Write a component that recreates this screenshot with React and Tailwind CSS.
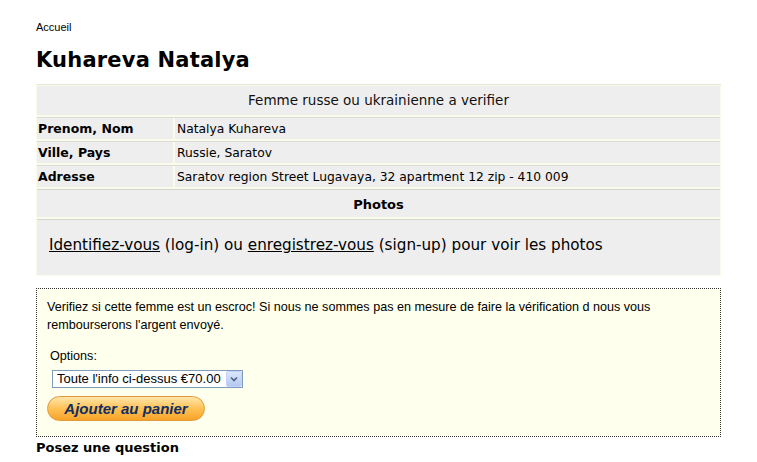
import React from 'react';

const rows = [
  { label: 'Prenom, Nom', value: 'Natalya Kuhareva' },
  { label: 'Ville, Pays', value: 'Russie, Saratov' },
  { label: 'Adresse', value: 'Saratov region Street Lugavaya, 32 apartment 12 zip - 410 009' },
];

function App() {
  return (
    <div className="min-h-[462px] bg-white px-[36px] pt-[20px] text-black font-['DejaVu_Sans',sans-serif]">
      <div className="w-[685px]">
        {/* Breadcrumb */}
        <div className="font-['Liberation_Sans',Arial,sans-serif] text-[11px] leading-[14px]">Accueil</div>

        {/* Title */}
        <h1 className="mt-[12px] text-[21px] leading-[28px] font-bold tracking-[0.2px]">Kuhareva Natalya</h1>

        {/* Info table */}
        <div className="mt-[10px] flex flex-col gap-[2px] bg-[#fbfbec] border-t border-[#e4e4d8] p-[1px]">
          <div className="h-[29px] bg-[#eeeeee] flex items-center justify-center text-[13.5px] text-[#111]">
            Femme russe ou ukrainienne a verifier
          </div>
          {rows.map((r) => (
            <div key={r.label} className="flex gap-[2px] h-[22px] border-t border-[#dcdcd2]">
              <div className="w-[136px] bg-[#eeeeee] flex items-center pl-[1px] pt-[1px] text-[12.5px] font-bold">{r.label}</div>
              <div className="flex-1 bg-[#eeeeee] flex items-center pl-[2px] pt-[1px] text-[12.3px]">
                {r.value}
              </div>
            </div>
          ))}
          <div className="h-[28px] bg-[#eeeeee] border-t border-[#d4d4d0] flex items-center justify-center pt-[3px] text-[13px] font-bold">
            Photos
          </div>
          <div className="h-[56px] bg-[#eeeeee] border-t border-[#d4d4d0] pl-[12px] pt-[14px] text-[15.2px]">
            <a href="#" className="underline">Identifiez-vous</a> (log-in) ou{' '}
            <a href="#" className="underline">enregistrez-vous</a> (sign-up) pour voir les photos
          </div>
        </div>

        {/* Verification box */}
        <div className="mt-[12px] border border-dotted border-[#333333] bg-[#ffffee] pl-[10px] pr-[8px] pt-[9px] pb-[15px] font-['Liberation_Sans',Arial,sans-serif] text-[12.6px] leading-[18px]">
          <p>
            Verifiez si cette femme est un escroc! Si nous ne sommes pas en mesure de faire la vérification d nous vous
            rembourserons l'argent envoyé.
          </p>
          <div className="mt-[13px] pl-[3px]">Options:</div>
          <div className="mt-[5px] ml-[5px] w-[191px] h-[18px] border border-[#7f9db9] bg-white flex items-center">
            <span className="flex-1 pl-[4px] text-[13px] leading-[16px]">Toute l'info ci-dessus €70.00</span>
            <span className="w-[16px] h-[16px] bg-gradient-to-b from-[#dbe6fb] to-[#b5c8f2] border border-[#c3d3fd] rounded-[2px] flex items-center justify-center">
              <svg width="8" height="6" viewBox="0 0 8 6">
                <path d="M1 1.5 L4 4.5 L7 1.5" fill="none" stroke="#4d6185" strokeWidth="1.6" />
              </svg>
            </span>
          </div>
          <button className="mt-[8px] w-[158px] h-[25px] rounded-full border border-[#e39a3b] bg-gradient-to-b from-[#ffe6a8] via-[#ffc153] to-[#f7a326] flex items-center justify-center font-['Liberation_Sans',Arial,sans-serif] text-[15px] font-bold italic text-[#0f2f63]">
            Ajouter au panier
          </button>
        </div>

        <div className="mt-[2px] text-[13px] font-bold leading-[18px]">Posez une question</div>
      </div>
    </div>
  );
}

export default App;
